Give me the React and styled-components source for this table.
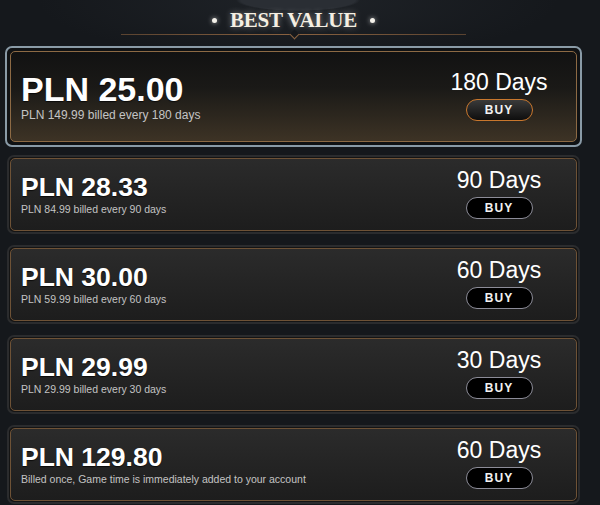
import React from "react"
import styled, { createGlobalStyle } from "styled-components"

const GlobalStyle = createGlobalStyle`
  html, body {
    margin: 0;
    padding: 0;
  }
  body {
    min-height: 505px;
    font-family: "Liberation Sans", Arial, sans-serif;
    background:
      radial-gradient(ellipse 62px 11px at 298px 0, #2a2e34 0 92%, transparent 100%),
      radial-gradient(ellipse 260px 60px at 298px 0, rgba(60, 66, 74, 0.25), transparent 100%),
      #15181c;
  }
`

const Page = styled.main`
  width: 577px;
  margin-left: 5px;
  display: flex;
  flex-direction: column;
`

// header with the ornament line
const Header = styled.header`
  height: 46px;
  box-sizing: border-box;
  padding-top: 9px;
  display: flex;
  flex-direction: column;
  align-items: center;
`

const TitleRow = styled.div`
  display: flex;
  align-items: center;
  gap: 13px;
  height: 22px;
`

const Dot = styled.span`
  width: 5px;
  height: 5px;
  border-radius: 50%;
  background: #f4f1ea;
  box-shadow: 0 0 5px rgba(255, 255, 255, 0.7);
`

const Title = styled.h1`
  margin: 0;
  font-family: "Liberation Serif", "Times New Roman", serif;
  font-size: 21px;
  line-height: 22px;
  font-weight: 700;
  letter-spacing: -0.2px;
  color: #f5efe2;
  text-shadow: 0 0 6px rgba(255, 255, 255, 0.45);
`

const Rule = styled.div`
  position: relative;
  width: 345px;
  height: 1px;
  margin-top: 3px;
  background: linear-gradient(90deg, #5a4330, #8a6240 50%, #5a4330);

  &::after {
    content: "";
    position: absolute;
    left: 50%;
    top: -3px;
    width: 6px;
    height: 6px;
    margin-left: -3px;
    border-right: 1px solid #8a6240;
    border-bottom: 1px solid #8a6240;
    background: #15181c;
    transform: rotate(45deg);
  }
`

const Frame = styled.article`
  border: 2px solid ${p => (p.$featured ? "#8a9ba7" : "#2b2c2e")};
  border-radius: 7px;
  padding: ${p => (p.$featured ? "3px" : "1px")};
  margin: ${p => p.$gap}px ${p => (p.$featured ? 0 : 2)}px 0;
  background: ${p => (p.$featured ? "#101214" : "#141414")};
`

const Panel = styled.div`
  height: ${p => (p.$featured ? 89 : 71)}px;
  border: 1px solid ${p => (p.$featured ? "#8d6a44" : "#6e5236")};
  border-radius: 5px;
  padding: 0 22px 0 10px;
  display: flex;
  align-items: center;
  justify-content: space-between;
  background: ${p =>
    p.$featured
      ? "linear-gradient(180deg, #121212 0%, #1a1917 40%, #3d3325 100%)"
      : "linear-gradient(180deg, #2b2b2b 0%, #1d1d1d 100%)"};
`

const Info = styled.div`
  display: flex;
  flex-direction: column;
`

const Price = styled.div`
  font-size: ${p => (p.$featured ? 34 : 26.5)}px;
  line-height: 1;
  font-weight: 700;
  color: #fff;
  text-shadow: 0 1px 1px rgba(0, 0, 0, 0.7);
`

const Note = styled.div`
  margin-top: ${p => (p.$featured ? 2 : 3)}px;
  font-size: ${p => (p.$featured ? 12 : 10.5)}px;
  line-height: ${p => (p.$featured ? 14 : 12)}px;
  color: #c4c4c4;
`

const Side = styled.div`
  width: 110px;
  margin-bottom: 2px;
  display: flex;
  flex-direction: column;
  align-items: center;
`

const Days = styled.div`
  font-size: 23px;
  line-height: 23px;
  color: #fff;
`

const BuyButton = styled.button`
  margin-top: 5px;
  width: 67px;
  height: 22px;
  box-sizing: border-box;
  border-radius: 11px;
  border: 1.5px solid ${p => (p.$featured ? "#c9772d" : "#8c8c98")};
  background: ${p => (p.$featured ? "linear-gradient(180deg, #3a3a3a, #0e0e0e)" : "#000")};
  color: #f2f2f2;
  font-family: "Liberation Sans", Arial, sans-serif;
  font-size: 12px;
  font-weight: 700;
  letter-spacing: 1px;
  padding: 0;
  cursor: pointer;
`

const plans = [
  { price: "PLN 25.00", note: "PLN 149.99 billed every 180 days", days: "180 Days", featured: true },
  { price: "PLN 28.33", note: "PLN 84.99 billed every 90 days", days: "90 Days" },
  { price: "PLN 30.00", note: "PLN 59.99 billed every 60 days", days: "60 Days" },
  { price: "PLN 29.99", note: "PLN 29.99 billed every 30 days", days: "30 Days" },
  { price: "PLN 129.80", note: "Billed once, Game time is immediately added to your account", days: "60 Days" },
]

export default function App() {
  return (
    <>
      <GlobalStyle />
      <Page>
        <Header>
          <TitleRow>
            <Dot />
            <Title>BEST VALUE</Title>
            <Dot />
          </TitleRow>
          <Rule />
        </Header>
        {plans.map((plan, i) => (
          <Frame key={i} $featured={plan.featured} $gap={i === 0 ? 0 : i === 1 ? 8 : 11}>
            <Panel $featured={plan.featured}>
              <Info>
                <Price $featured={plan.featured}>{plan.price}</Price>
                <Note $featured={plan.featured}>{plan.note}</Note>
              </Info>
              <Side>
                <Days>{plan.days}</Days>
                <BuyButton $featured={plan.featured}>BUY</BuyButton>
              </Side>
            </Panel>
          </Frame>
        ))}
      </Page>
    </>
  )
}
